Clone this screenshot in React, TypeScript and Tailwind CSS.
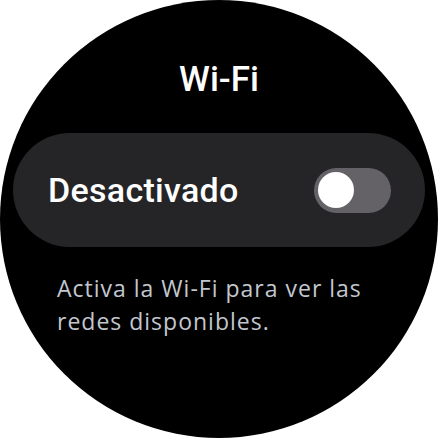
export default function App() {
  return (
    <div className="w-[438px] h-[438px] bg-white" style={{ fontFamily: "Roboto, 'Noto Sans', sans-serif" }}>
      <div className="w-[438px] h-[438px] rounded-full bg-black flex flex-col">
        <h1 className="mt-[60px] text-center text-[35px] leading-[40px] font-medium text-white">Wi-Fi</h1>
        <div className="mt-[33px] mx-[13px] h-[114px] rounded-full bg-[#252527] flex items-center justify-between pl-[35px] pr-[34px]">
          <span className="text-[34px] leading-[40px] font-medium tracking-[0.3px] text-white">Desactivado</span>
          <div className="w-[77px] h-[45px] rounded-full bg-[#646266] flex items-center pl-[4px]">
            <div className="w-[36px] h-[36px] rounded-full bg-white" />
          </div>
        </div>
        <p
          className="mt-[25px] ml-[57px] w-[340px] text-[23px] leading-[33px] tracking-[1px] text-[#c2c7cf]"
          style={{ fontFamily: "'Open Sans', Roboto, sans-serif" }}
        >
          Activa la Wi-Fi para ver las
          <br />
          redes disponibles.
        </p>
      </div>
    </div>
  );
}
